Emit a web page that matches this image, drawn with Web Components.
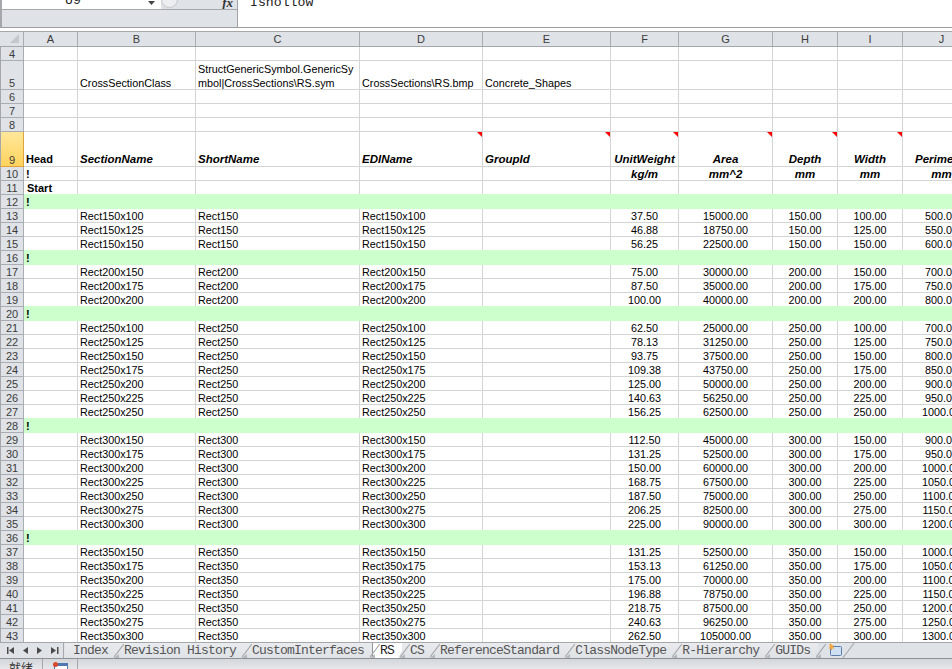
<!DOCTYPE html>
<html lang="en">
<head>
<meta charset="utf-8">
<title>RS sheet</title>
<style>
  html, body { margin: 0; height: 100%; }
  body {
    display: flex;
    flex-direction: column;
    overflow: hidden;
    background: #fff;
    font-family: "Liberation Sans", Arial, sans-serif;
  }
</style>
</head>
<body>
<xl-formula-bar cell="U9" value="Ishollow"></xl-formula-bar>
<xl-sheet></xl-sheet>
<xl-tabs>
  <xl-tab>Index</xl-tab>
  <xl-tab>Revision History</xl-tab>
  <xl-tab>CustomInterfaces</xl-tab>
  <xl-tab active>RS</xl-tab>
  <xl-tab>CS</xl-tab>
  <xl-tab>ReferenceStandard</xl-tab>
  <xl-tab>ClassNodeType</xl-tab>
  <xl-tab>R-Hierarchy</xl-tab>
  <xl-tab>GUIDs</xl-tab>
</xl-tabs>
<xl-status>就绪</xl-status>

<script>
class XlFormulaBar extends HTMLElement {
  connectedCallback() {
    this.attachShadow({ mode: 'open' });
    this.shadowRoot.innerHTML = `
      <style>
        :host { display: flex; flex: none; height: 28px; box-sizing: border-box; border-bottom: 1px solid #9b9da0; border-left: 2px solid #a5a7aa; background: #fff; }
        .left { width: 235px; flex: none; display: flex; flex-direction: column; border-right: 1px solid #a0a2a5; }
        .top { height: 10px; display: flex; border-bottom: 1px solid #a5a7aa; overflow: hidden; flex: none; box-sizing: border-box; }
        .name { width: 159px; flex: none; display: flex; overflow: hidden; font: 13.2px/14px "Liberation Mono", monospace; color: #222; }
        .name span { margin: -6px 0 0 63px; }
        .name svg { margin: 0 0 0 67px; }
        .btn { flex: 1; background: #dfe2e6; display: flex; justify-content: space-between; position: relative; }
        .btn u { width: 17px; height: 17px; margin-top: -9px; border-radius: 50%; background: #eceef0; border: 1px solid #c3c6ca; box-sizing: border-box; }
        .btn i { font: italic bold 13px/9px "Liberation Serif", serif; margin: -2px 4px 0 0; color: #333; }
        .band { flex: 1; background: #dfe2e6; }
        .value { flex: 1; overflow: hidden; font: 13.2px/14px "Liberation Mono", monospace; color: #222; padding-left: 12px; }
        .value span { display: block; margin-top: -4px; }
      </style>
      <div class="left">
        <div class="top">
          <div class="name"><span>${this.getAttribute('cell')}</span><svg width="8" height="9" viewBox="0 0 8 9"><path d="M0 1h7L3.500 5z" fill="#444"/></svg></div>
          <div class="btn"><u></u><i>fx</i></div>
        </div>
        <div class="band"></div>
      </div>
      <div class="value"><span>${this.getAttribute('value')}</span></div>
    `;
  }
}

// one group per bold "!" separator row: depth and its widths
const GROUPS = [
  [150, [100, 125, 150]],
  [200, [150, 175, 200]],
  [250, [100, 125, 150, 175, 200, 225, 250]],
  [300, [150, 175, 200, 225, 250, 275, 300]],
  [350, [150, 175, 200, 225, 250, 275, 300]],
];
const COLS = ['A', 'B', 'C', 'D', 'E', 'F', 'G', 'H', 'I', 'J'];

class XlSheet extends HTMLElement {
  connectedCallback() {
    this.attachShadow({ mode: 'open' });
    const rows = [];
    const row = (n, h, cells, cls = '') => {
      const html = COLS.map((c, i) => {
        const v = cells[i] || '';
        const num = i >= 5 ? ' mid' : '';
        return `<div class="c${num}">${v}</div>`;
      }).join('');
      rows.push(`<div class="row ${cls}" style="--h:${h}px"><div class="n">${n}</div>${html}</div>`);
    };
    const tri = '<b class="tri"></b>';

    row(4, 14, []);
    row(5, 29, ['', 'CrossSectionClass', '<span class="wrap">StructGenericSymbol.GenericSy<br>mbol|CrossSections\\RS.sym</span>', 'CrossSections\\RS.bmp', 'Concrete_Shapes']);
    row(6, 14, []);
    row(7, 14, []);
    row(8, 14, []);
    rows.push(`<div class="row names" style="--h:35px"><div class="n sel">9</div>
      <div class="c"><strong>Head</strong></div>
      <div class="c"><em>SectionName</em></div>
      <div class="c"><em>ShortName</em></div>
      <div class="c"><em>EDIName</em>${tri}</div>
      <div class="c"><em>GroupId</em>${tri}</div>
      <div class="c mid"><em>UnitWeight</em>${tri}</div>
      <div class="c mid"><em>Area</em>${tri}</div>
      <div class="c mid"><em>Depth</em>${tri}</div>
      <div class="c mid"><em>Width</em>${tri}</div>
      <div class="c mid"><em>Perimeter</em></div>
    </div>`);
    row(10, 14, ['<strong>!</strong>', '', '', '', '', '<em>kg/m</em>', '<em>mm^2</em>', '<em>mm</em>', '<em>mm</em>', '<em>mm</em>']);
    row(11, 14, ['<strong class="start">Start</strong>']);

    let n = 12;
    for (const [depth, widths] of GROUPS) {
      row(n++, 14, ['<strong>!</strong>'], 'green');
      for (const w of widths) {
        const area = depth * w;
        const name = `Rect${depth}x${w}`;
        row(n++, 14, ['', name, `Rect${depth}`, name, '',
          (area * 0.0025).toFixed(2), area.toFixed(2), depth.toFixed(2), w.toFixed(2), (2 * (depth + w)).toFixed(2)]);
      }
    }

    this.shadowRoot.innerHTML = `
      <style>
        :host { display: block; flex: 1; min-height: 0; overflow: hidden; padding-top: 3px; box-sizing: border-box; font: 10.8px/11px "Liberation Sans", Arial, sans-serif; color: #000; }
        .row, .cols { display: grid; grid-template-columns: 24px 54px 118px 164px 123px 128px 68px 94px 65px 65px 78px; width: 981px; }
        .cols { height: 16px; box-sizing: border-box; background: #dfe2e6; border-top: 1px solid #a5a7aa; border-bottom: 1px solid #a3a6aa; }
        .cols div { border-right: 1px solid #a9acb1; text-align: center; line-height: 14px; color: #3b3b3b; font-size: 11px; }
        .corner { position: relative; }
        .corner::after { content: ""; position: absolute; right: 4px; bottom: 3px; border-left: 9px solid transparent; border-bottom: 9px solid #c4c7cc; }
        .row { height: var(--h); }
        .n, .c { box-sizing: border-box; border-right: 1px solid #d4d4d4; border-bottom: 1px solid #d4d4d4; display: flex; align-items: flex-end; white-space: nowrap; overflow: hidden; position: relative; }
        .n { background: #dfe2e6; border-right-color: #a9acb1; border-bottom-color: #a9acb1; border-left: 1px solid #a5a7aa; justify-content: center; color: #3b3b3b; font-size: 11px; }
        .n.sel { background: linear-gradient(#ffe79a, #ffd35e); border-right-color: #e2a33b; border-bottom-color: #e2a33b; }
        .c { padding: 0 2px; }
        .mid { justify-content: center; padding: 0; }
        .names .c { padding-bottom: 1px; }
        .wrap { line-height: 14px; margin-bottom: -1px; }
        .c strong { font-weight: bold; font-size: 11px; }
        .c em { font-weight: bold; font-size: 11.5px; }
        .start { margin-left: 1px; }
        .tri { position: absolute; right: 0; top: 0; border-top: 5px solid #f00; border-left: 5px solid transparent; }
        .green .c { background: #ccffcc; border-color: #ccffcc; box-shadow: 0 -1px 0 #ccffcc; overflow: visible; }
      </style>
      <div class="cols"><div class="corner"></div>${COLS.map(c => `<div>${c}</div>`).join('')}</div>
      ${rows.join('')}
    `;
  }
}

class XlTabs extends HTMLElement {
  connectedCallback() {
    this.attachShadow({ mode: 'open' });
    this.shadowRoot.innerHTML = `
      <style>
        :host { display: flex; flex: none; height: 17px; box-sizing: border-box; background: #dfe2e6; border-top: 1px solid #a5a7aa; border-bottom: 1px solid #8e9094; overflow: hidden; }
        .nav { width: 63px; flex: none; display: flex; align-items: center; }
        .nav svg { display: block; margin-left: 5px; }
        .strip { display: flex; flex: 1; border-left: 1px solid #a5a7aa; padding-left: 1px; }
        .add { position: relative; width: 40px; }
        .add svg { position: absolute; left: 9px; top: 0; }
        .add::after { content: ""; position: absolute; right: 0; top: 7px; width: 19px; height: 1px; background: #a5a7aa; transform: rotate(-53deg); }
      </style>
      <div class="nav"><svg width="55" height="9" viewBox="0 0 55 9" fill="#4a4a4a"><path d="M2 1h1.500v7H2zM9 1v7L4 4.500zM23 1v7l-5-3.500zM32 1v7l5-3.500zM46 1v7l5-3.500zM52 1h1.500v7H52z"/></svg></div>
      <div class="strip"><slot></slot>
        <div class="add"><svg width="16" height="14" viewBox="0 0 16 14"><rect x="3.500" y="3.500" width="11" height="9" rx="1" fill="#cfe0f2" stroke="#5b7fa8"/><path d="M4 .5l1 2 2-.5-1 2 1.500 1.500-2 0-1 2-1-2-2 0L3 3.500 2 1.500z" fill="#f2a73a"/></svg></div>
      </div>
    `;
  }
}

class XlTab extends HTMLElement {
  connectedCallback() {
    this.attachShadow({ mode: 'open' });
    this.shadowRoot.innerHTML = `
      <style>
        :host { display: block; position: relative; padding: 0 8px; font: 13px/15px "Liberation Mono", monospace; letter-spacing: -0.8px; color: #555; white-space: nowrap; background: linear-gradient(#e9ebee, #dfe2e6); }
        :host([active]) { background: none; color: #222; }
        :host([active])::before { content: ""; position: absolute; inset: 0 -4px 0 0; background: #fff; border-left: 1px solid #8e9094; clip-path: polygon(0 0, 100% 0, calc(100% - 8px) 100%, 0 100%); }
        :host::after { content: ""; position: absolute; right: -11px; top: 7px; width: 16px; height: 1px; background: #a5a7aa; transform: rotate(-53deg); z-index: 1; }
        .t { position: relative; }
        .notch { position: absolute; right: -3px; bottom: 0; border-left: 5px solid transparent; border-bottom: 4px solid #b4b7bb; z-index: 1; }
      </style>
      <span class="t"><slot></slot></span><b class="notch"></b>
    `;
  }
}

class XlStatus extends HTMLElement {
  connectedCallback() {
    this.attachShadow({ mode: 'open' });
    this.shadowRoot.innerHTML = `
      <style>
        :host { display: flex; flex: none; height: 10px; overflow: hidden; background: linear-gradient(#d3d6da, #e6e8eb); font: 12px/13px "Noto Sans CJK SC", sans-serif; color: #333; }
        .ready { width: 33px; padding: 2px 0 0 9px; border-right: 1px solid #a5a7aa; flex: none; }
        .icon { width: 34px; display: flex; justify-content: center; padding-top: 3px; border-right: 1px solid #a5a7aa; flex: none; }
      </style>
      <div class="ready"><slot></slot></div>
      <div class="icon"><svg width="16" height="11" viewBox="0 0 16 11"><rect x="2.500" y="1.500" width="13" height="10" fill="#fff" stroke="#4f78b0"/><rect x="3" y="2" width="12" height="2" fill="#4f78b0"/><circle cx="3.500" cy="2.500" r="2.500" fill="#d9482b"/></svg></div>
    `;
  }
}

customElements.define('xl-formula-bar', XlFormulaBar);
customElements.define('xl-sheet', XlSheet);
customElements.define('xl-tabs', XlTabs);
customElements.define('xl-tab', XlTab);
customElements.define('xl-status', XlStatus);
</script>
</body>
</html>
